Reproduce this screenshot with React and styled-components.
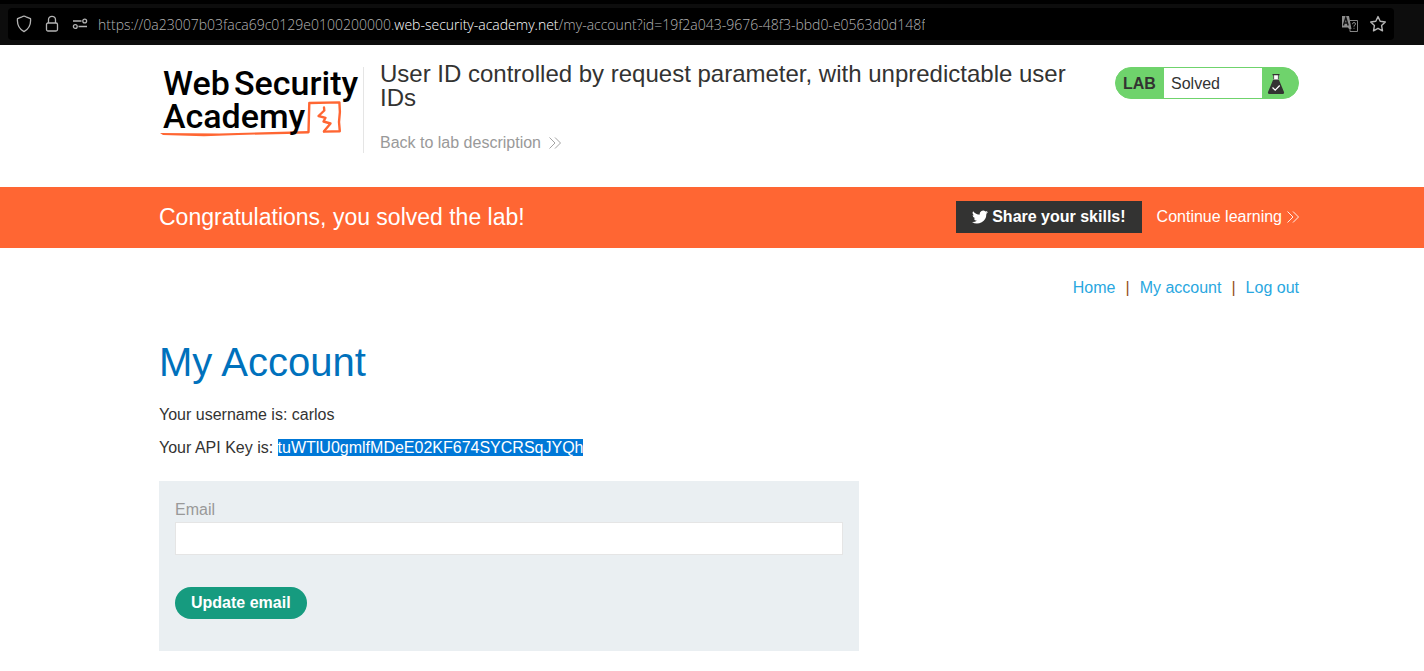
import React from 'react';
import styled, { createGlobalStyle } from 'styled-components';

const GlobalStyle = createGlobalStyle`
  *, *::before, *::after { box-sizing: border-box; }
  body {
    margin: 0;
    background: #fff;
    color: #333332;
    font: 16px/24px "Liberation Sans", Arial, sans-serif;
  }
  a { text-decoration: none; }
  h1, h2, p { margin: 0; font-weight: 400; }
`;

const BrowserBar = styled.div`
  padding: 4px 30px 5px 8px;
  background: #0d0d0d;
  border-top: 4px solid #000;
`;

const AddressField = styled.div`
  display: flex;
  align-items: center;
  height: 32px;
  padding: 0 2px 0 8px;
  border-radius: 4px;
  background: #000;
`;

const IconButton = styled.button`
  display: flex;
  align-items: center;
  justify-content: center;
  width: 28px;
  height: 28px;
  padding: 0;
  border: 0;
  background: none;
  color: #b4b4b4;
`;

const ShieldButton = styled(IconButton)`
  width: 16px;
  margin-right: 6px;
`;

const Tools = styled.div`
  display: flex;
  margin-left: auto;
`;

const Url = styled.div`
  margin-left: 4px;
  padding-top: 2px;
  overflow: hidden;
  white-space: nowrap;
  font: 300 14px/20px "Open Sans", "Noto Sans", sans-serif;
  color: #b4b4b4;
`;

const Domain = styled.span`
  color: #fff;
`;

const Container = styled.div`
  max-width: 1174px;
  margin: 0 auto;
  padding-left: 34px;
`;

const HeaderRow = styled(Container)`
  display: flex;
  align-items: flex-start;
  padding-top: 22px;
  padding-bottom: 32px;
`;

const LogoLink = styled.a`
  flex: none;
  width: 205px;
  height: 86px;
  border-right: 1px solid #e5e5e5;
`;

const LogoDrawing = styled.svg`
  display: block;
  margin-top: -10px;
`;

const TitleBlock = styled.div`
  flex: 1;
  margin: -5px 24px 0 16px;
`;

const LabTitle = styled.h2`
  font-size: 24px;
  line-height: 24px;
`;

const ArrowLink = styled.a`
  display: inline-flex;
  align-items: center;
  gap: ${(p) => p.$gap}px;
  color: ${(p) => p.$color};
`;

const BackRow = styled.div`
  margin-top: 21px;
`;

const LabBadge = styled.div`
  display: flex;
  flex: none;
  width: 184px;
  height: 32px;
  border: 1px solid #6fd36c;
  border-radius: 16px;
  overflow: hidden;
  background: #6fd36c;
  line-height: 32px;
`;

const BadgeLabel = styled.strong`
  width: 48px;
  padding-left: 7px;
`;

const BadgeStatus = styled.span`
  flex: 1;
  padding-left: 7px;
  background: #fff;
`;

const BadgeIcon = styled.span`
  display: flex;
  width: 36px;
  padding: 5px 0 0 5px;
`;

const Banner = styled.section`
  background: #ff6633;
  color: #fff;
`;

const BannerRow = styled(Container)`
  display: flex;
  align-items: center;
  padding-top: 14px;
  padding-bottom: 15px;
`;

const BannerText = styled.p`
  margin-right: auto;
  font-size: 23px;
`;

const ShareButton = styled.button`
  display: flex;
  align-items: center;
  gap: 4px;
  height: 32px;
  margin-right: 15px;
  padding: 0 16px;
  border: 0;
  background: #333332;
  color: #fff;
  font: bold 16px/32px "Liberation Sans", Arial, sans-serif;
`;

const Nav = styled.nav`
  display: flex;
  justify-content: flex-end;
  gap: 10px;
  padding-top: 28px;
  color: #954f16;
`;

const NavLink = styled.a`
  color: #29a7df;
`;

const PageTitle = styled.h1`
  margin-top: 38px;
  color: #0071bc;
  font-size: 40px;
  line-height: 48px;
`;

const Details = styled.div`
  display: grid;
  gap: 9px;
  margin-top: 17px;
`;

const ApiKey = styled.mark`
  background: #0078d7;
  color: #fff;
`;

const EmailForm = styled.form`
  max-width: 700px;
  margin: 21px 0 20px;
  padding: 17px 16px 32px;
  background: #eaeff2;
`;

const EmailLabel = styled.label`
  display: block;
  color: #999;
`;

const EmailInput = styled.input`
  display: block;
  width: 100%;
  height: 33px;
  margin-bottom: 32px;
  padding: 0 8px;
  border: 1px solid #e5e5e5;
  background: #fff;
  font: inherit;
`;

const SubmitButton = styled.button`
  height: 32px;
  padding: 0 16px;
  border: 0;
  border-radius: 16px;
  display: block;
  background: #169b7f;
  color: #fff;
  font: bold 16px/32px "Liberation Sans", Arial, sans-serif;
`;

const Arrows = () => (
  <svg width="12" height="12" viewBox="0 0 12 12" fill="none" stroke="currentColor" strokeWidth="0.9" aria-hidden="true">
    <path d="M0.5 0.5 6 6 0.5 11.5M6 0.5 11.5 6 6 11.5" />
  </svg>
);

const Logo = () => (
  <LogoDrawing width="204" height="86" viewBox="0 -10 204 86" role="img" aria-label="Web Security Academy">
    <g fill="none" stroke="#ff6633" strokeWidth="2.4" strokeLinejoin="round" strokeLinecap="round">
      <path d="M149.5 65 150.3 36 180.4 35.4Q181.6 45 180 55L180.8 64.2 165 64.6" />
      <path d="M165 40.5 165.3 43.5 159.5 49 166.5 50.8 164.5 54.5 171.5 56.5 165 64.2" />
    </g>
    <path fill="#ff6633" d="M1 66 60 66.4 149.5 64V66.4L80 68 45 69.2 4 68Z" />
    <g fill="#000" fontFamily="Roboto, sans-serif" fontSize="34" fontWeight="500">
      <text x="4" y="28">Web</text>
      <text x="75" y="28">Security</text>
      <text x="4" y="61">Academy</text>
    </g>
  </LogoDrawing>
);

const Flask = () => (
  <svg width="18" height="22" viewBox="0 0 18 22" aria-hidden="true">
    <path fill="#fff" d="M6.5 2h5v6h-5z" />
    <path fill="#333332" d="M5.5 1h7v1.2h-7zM6.3 2h.8v4h-.8zM10.9 2h.8v4h-.8zM6.2 6.5h5.6L17 19q.5 2-1.5 2h-13Q.5 21 1 19Z" />
    <path fill="none" stroke="#fff" strokeWidth="1.3" d="m5.5 14.5 2.7 2.6 4.5-4.6" />
  </svg>
);

const Twitter = () => (
  <svg width="16" height="16" viewBox="0 0 24 24" fill="#fff" aria-hidden="true">
    <path d="M24 4.6a10 10 0 0 1-2.8.8 5 5 0 0 0 2.1-2.7 10 10 0 0 1-3.1 1.2 4.9 4.9 0 0 0-8.4 4.5A14 14 0 0 1 1.7 3.2a4.9 4.9 0 0 0 1.5 6.5 5 5 0 0 1-2.2-.6v.1a4.9 4.9 0 0 0 3.9 4.8 5 5 0 0 1-2.2.1 4.9 4.9 0 0 0 4.6 3.4A9.9 9.9 0 0 1 0 19.5 14 14 0 0 0 21.5 7.1 10 10 0 0 0 24 4.6Z" />
  </svg>
);

const Shield = () => (
  <svg width="16" height="18" viewBox="0 0 16 18" fill="none" stroke="currentColor" strokeWidth="1.3" strokeLinejoin="round">
    <path d="M8 1.2Q9 1.2 10 1.8L14.5 3.6Q15.4 12.5 8 16.6Q.6 12.5 1.5 3.6L6 1.8Q7 1.2 8 1.2Z" />
  </svg>
);

const Lock = () => (
  <svg width="14" height="18" viewBox="0 0 14 18" fill="none" stroke="currentColor" strokeWidth="1.3">
    <rect x="1.5" y="8" width="11" height="8" rx="1.5" />
    <path d="M3.5 8V4.8a3.5 3.5 0 0 1 7 0V8" />
  </svg>
);

const Permissions = () => (
  <svg width="16" height="12" viewBox="0 0 16 12" fill="none" stroke="currentColor" strokeWidth="1.3">
    <circle cx="12.7" cy="3" r="1.9" />
    <circle cx="3.3" cy="8.5" r="1.9" />
    <path d="M1 3h8.5M6.5 8.5H15" />
  </svg>
);

const Translate = () => (
  <svg width="18" height="18" viewBox="0 0 18 18" fill="none">
    <path fill="#8c8c8c" d="M1 1h7l2.5 13H8l-1-1.5H1z" />
    <path stroke="#111" strokeWidth="1.4" d="m2.4 10.5 2.4-8 2.4 8M3.2 8h3.2" />
    <path stroke="#858585" d="M8.5 5.5h8v11h-7.5v-3" />
    <path stroke="#858585" d="M11.5 9.2q0-1.7 1.5-1.7t1.5 1.5q0 1-1.5 1.7v1M13 12.8v1" />
  </svg>
);

const Star = () => (
  <svg width="18" height="18" viewBox="0 0 18 18" fill="none" stroke="currentColor" strokeWidth="1.4" strokeLinejoin="round">
    <path d="m9 1.6 2.2 4.7 5.1.7-3.7 3.6.9 5.2L9 13.3l-4.5 2.5.9-5.2L1.7 7l5.1-.7Z" />
  </svg>
);

export default function App() {
  return (
    <>
      <GlobalStyle />
      <BrowserBar>
        <AddressField>
          <ShieldButton aria-label="Tracking protection"><Shield /></ShieldButton>
          <IconButton aria-label="Connection security"><Lock /></IconButton>
          <IconButton aria-label="Permissions"><Permissions /></IconButton>
          <Url role="textbox" aria-label="Address" aria-readonly="true">
            https://0a23007b03faca69c0129e0100200000.<Domain>web-security-academy.net</Domain>/my-account?id=19f2a043-9676-48f3-bbd0-e0563d0d148f
          </Url>
          <Tools>
            <IconButton aria-label="Translate page"><Translate /></IconButton>
            <IconButton aria-label="Bookmark page"><Star /></IconButton>
          </Tools>
        </AddressField>
      </BrowserBar>

      <header>
        <HeaderRow>
          <LogoLink href="#academy"><Logo /></LogoLink>
          <TitleBlock>
            <LabTitle>User ID controlled by request parameter, with unpredictable user IDs</LabTitle>
            <BackRow>
              <ArrowLink href="#lab" $gap={8} $color="#999">Back to lab description <Arrows /></ArrowLink>
            </BackRow>
          </TitleBlock>
          <LabBadge>
            <BadgeLabel>LAB</BadgeLabel>
            <BadgeStatus>Solved</BadgeStatus>
            <BadgeIcon><Flask /></BadgeIcon>
          </LabBadge>
        </HeaderRow>
      </header>

      <Banner>
        <BannerRow>
          <BannerText>Congratulations, you solved the lab!</BannerText>
          <ShareButton type="button"><Twitter />Share your skills!</ShareButton>
          <ArrowLink href="#learning" $gap={5} $color="#fff">Continue learning <Arrows /></ArrowLink>
        </BannerRow>
      </Banner>

      <Container as="main">
        <Nav>
          <NavLink href="#home">Home</NavLink>
          <span>|</span>
          <NavLink href="#my-account">My account</NavLink>
          <span>|</span>
          <NavLink href="#logout">Log out</NavLink>
        </Nav>
        <PageTitle>My Account</PageTitle>
        <Details>
          <p>Your username is: carlos</p>
          <p>Your API Key is: <ApiKey>tuWTlU0gmlfMDeE02KF674SYCRSqJYQh</ApiKey></p>
        </Details>
        <EmailForm onSubmit={(e) => e.preventDefault()}>
          <EmailLabel htmlFor="email">Email</EmailLabel>
          <EmailInput id="email" type="email" />
          <SubmitButton type="submit">Update email</SubmitButton>
        </EmailForm>
      </Container>
    </>
  );
}
